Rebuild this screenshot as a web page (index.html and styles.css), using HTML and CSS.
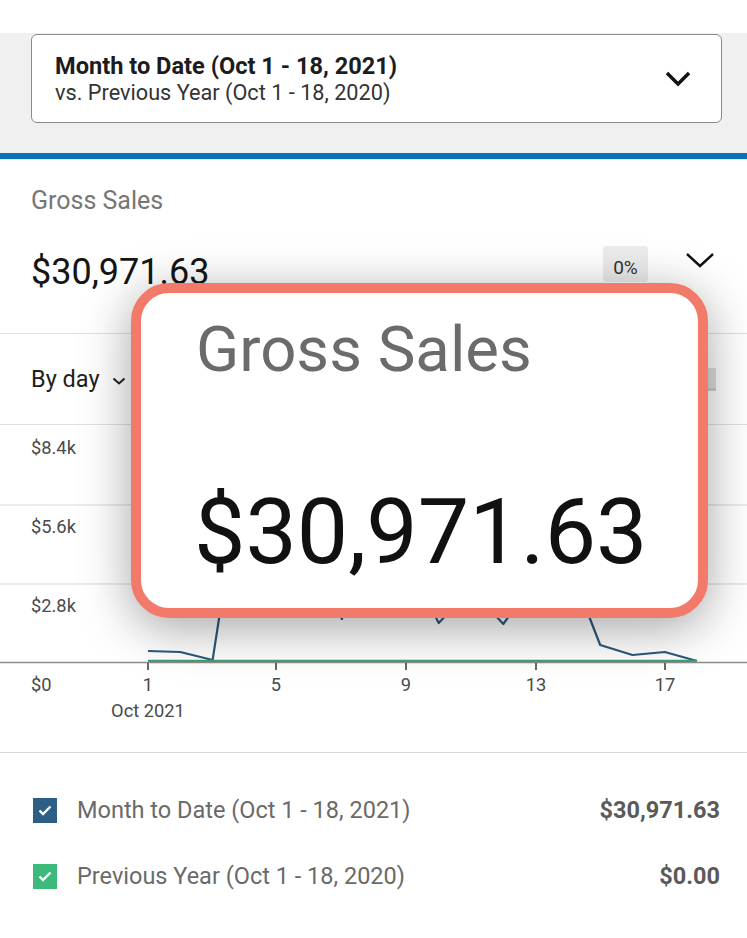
FILE: index.html
```html
<!DOCTYPE html>
<html lang="en">
<head>
    <meta charset="UTF-8">
    <meta name="viewport" content="width=device-width, initial-scale=1.0">
    <title>Gross Sales</title>
    <link rel="stylesheet" href="styles.css">
</head>
<body>
<div class="page">
    <div class="status-strip"></div>

    <div class="range">
        <div class="range-card">
            <div class="range-text">
                <div class="range-title">Month to Date (Oct 1 - 18, 2021)</div>
                <div class="range-sub">vs. Previous Year (Oct 1 - 18, 2020)</div>
            </div>
            <svg class="range-chevron" viewBox="0 0 26 16" width="26" height="16">
                <polyline points="2,2 13,13 24,2" fill="none" stroke="#111" stroke-width="3.4" stroke-linejoin="miter"/>
            </svg>
        </div>
    </div>
    <div class="accent"></div>

    <div class="metric">
        <div class="metric-label">Gross Sales</div>
        <div class="metric-row">
            <div class="metric-value">$30,971.63</div>
            <div class="metric-badge">0%</div>
            <svg class="metric-chevron" viewBox="0 0 30 16" width="30" height="16">
                <polyline points="2,2 15,14 28,2" fill="none" stroke="#111" stroke-width="2.4"/>
            </svg>
        </div>
    </div>

    <div class="controls">
        <div class="period">By day
            <svg viewBox="0 0 14 8" width="14" height="8">
                <polyline points="1.5,1.5 7,6.5 12.5,1.5" fill="none" stroke="#222" stroke-width="2"/>
            </svg>
        </div>
        <div class="view-toggle"></div>
    </div>

    <div class="chart">
        <svg viewBox="0 0 747 300" width="747" height="300">
            <line x1="0" y1="80" x2="747" y2="80" stroke="#e4e4e4" stroke-width="1.5"/>
            <line x1="0" y1="159" x2="747" y2="159" stroke="#e4e4e4" stroke-width="1.5"/>

            <g class="axis-label">
                <text x="31" y="29">$8.4k</text>
                <text x="31" y="108">$5.6k</text>
                <text x="31" y="187">$2.8k</text>
                <text x="31" y="266">$0</text>
            </g>

            <polyline fill="none" stroke="#2b5a7c" stroke-width="2.2" stroke-linejoin="round"
                points="148,226 180.3,227 212.6,235 244.9,27 277.2,60 309.5,50 341.8,194 374.1,110 406.4,134 438.7,198 471,164 503.3,199 535.6,154 567.9,137 600.2,220 632.5,230 664.8,227 697.1,236"/>
            <line x1="148" y1="236" x2="697" y2="236" stroke="#3f9e72" stroke-width="2.6"/>
            <line x1="0" y1="237.5" x2="747" y2="237.5" stroke="#8c8c8c" stroke-width="1.5"/>

            <g stroke="#444" stroke-width="1.6">
                <line x1="148" y1="238" x2="148" y2="245"/>
                <line x1="276" y1="238" x2="276" y2="245"/>
                <line x1="406" y1="238" x2="406" y2="245"/>
                <line x1="536" y1="238" x2="536" y2="245"/>
                <line x1="665" y1="238" x2="665" y2="245"/>
            </g>
            <g class="axis-label" text-anchor="middle">
                <text x="148" y="266">1</text>
                <text x="276" y="266">5</text>
                <text x="406" y="266">9</text>
                <text x="536" y="266">13</text>
                <text x="665" y="266">17</text>
                <text x="148" y="292">Oct 2021</text>
            </g>
        </svg>
    </div>

    <div class="legend">
        <div class="legend-row">
            <span class="check check-current">
                <svg viewBox="0 0 14 11" width="14" height="11"><polyline points="1.5,5.5 5,9 12.5,1.5" fill="none" stroke="#fff" stroke-width="2.4"/></svg>
            </span>
            <span class="legend-name">Month to Date (Oct 1 - 18, 2021)</span>
            <span class="legend-value">$30,971.63</span>
        </div>
        <div class="legend-row">
            <span class="check check-previous">
                <svg viewBox="0 0 14 11" width="14" height="11"><polyline points="1.5,5.5 5,9 12.5,1.5" fill="none" stroke="#fff" stroke-width="2.4"/></svg>
            </span>
            <span class="legend-name">Previous Year (Oct 1 - 18, 2020)</span>
            <span class="legend-value">$0.00</span>
        </div>
    </div>

    <div class="callout">
        <div class="callout-label">Gross Sales</div>
        <div class="callout-value">$30,971.63</div>
    </div>
</div>
</body>
</html>
```

FILE: styles.css
```css
body {
    margin: 0;
    background: #fff;
    font-family: Roboto, 'Noto Sans', sans-serif;
    color: #222;
}
.page {
    position: relative;
    width: 747px;
    height: 938px;
    overflow: hidden;
}
.status-strip {
    height: 33px;
    background: #fff;
}
.range {
    background: #f0f0f0;
    padding: 1px 25px 30px 31px;
}
.range-card {
    height: 89px;
    box-sizing: border-box;
    background: #fff;
    border: 1.5px solid #8a8a8a;
    border-radius: 6px;
    padding: 0 30px 0 23px;
    display: flex;
    align-items: center;
    justify-content: space-between;
}
.range-title {
    font-size: 23.6px;
    font-weight: 700;
    color: #1c1c1c;
    line-height: 28px;
}
.range-sub {
    font-size: 21.7px;
    color: #333;
    line-height: 26px;
}
.accent {
    height: 6px;
    background: #0b72b5;
    border-bottom: 1px solid #d9ecf6;
}
.metric {
    height: 174px;
    box-sizing: border-box;
    padding: 26px 31px 0;
    border-bottom: 1px solid #e0e0e0;
}
.metric-label {
    font-size: 25px;
    line-height: 30px;
    color: #767676;
}
.metric-row {
    display: flex;
    align-items: center;
    margin-top: 31px;
    height: 40px;
}
.metric-value {
    font-size: 36px;
    color: #151515;
    margin-top: 10px;
}
.metric-badge {
    margin-left: auto;
    width: 45px;
    height: 36px;
    box-sizing: border-box;
    padding-top: 10px;
    text-align: center;
    background: #ececec;
    border-radius: 4px;
    font-size: 19px;
    color: #333;
    margin-top: -6px;
}
.metric-chevron {
    margin: -14px 1px 0 37px;
}
.controls {
    height: 90px;
    border-bottom: 1px solid #e0e0e0;
    display: flex;
    align-items: center;
    padding: 0 31px;
}
.period {
    font-size: 23.5px;
    color: #1e1e1e;
    display: flex;
    align-items: center;
    gap: 12px;
}
.period svg {
    margin-top: 3px;
}
.view-toggle {
    margin-left: auto;
    width: 90px;
    height: 20px;
    background: #dedede;
    border-bottom: 3px solid #cfcfcf;
}
.chart {
    height: 327px;
}
.chart svg {
    display: block;
}
.axis-label {
    font-family: Roboto, sans-serif;
    font-size: 18.3px;
    fill: #4a4a4a;
}
.legend {
    border-top: 1.5px solid #d6d6d6;
    padding: 40px 27px 0 33px;
}
.legend-row {
    display: flex;
    align-items: center;
    height: 34px;
    margin-bottom: 32px;
}
.check {
    width: 24px;
    height: 25px;
    display: flex;
    align-items: center;
    justify-content: center;
    margin-right: 20px;
}
.check-current {
    background: #2d5e86;
}
.check-previous {
    background: #3cba7b;
}
.legend-name {
    font-size: 23.5px;
    color: #6a6a6a;
}
.legend-value {
    margin-left: auto;
    font-size: 23.5px;
    font-weight: 700;
    color: #5a5a5a;
}
.callout {
    position: absolute;
    left: 131px;
    top: 283px;
    width: 577px;
    height: 335px;
    box-sizing: border-box;
    background: #fff;
    border: 10px solid #f27a6b;
    border-radius: 38px;
    box-shadow: 0 10px 50px rgba(0, 0, 0, 0.36);
    padding: 26px 0 0 55px;
}
.callout-label {
    font-size: 63.5px;
    line-height: 62px;
    color: #6b6b6b;
}
.callout-value {
    font-size: 91.5px;
    line-height: 90px;
    color: #111;
    margin-top: 106px;
    margin-left: -2px;
}
```
